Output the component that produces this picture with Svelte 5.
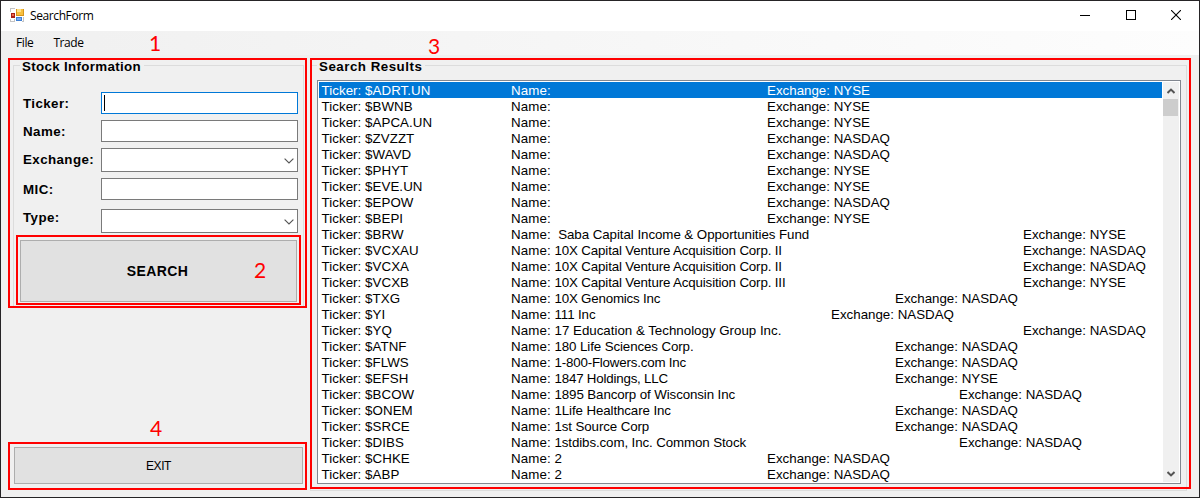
<script>
  const source = [
    ['$ADRT.UN', '', 'NYSE', 0], ['$BWNB', '', 'NYSE', 0], ['$APCA.UN', '', 'NYSE', 0],
    ['$ZVZZT', '', 'NASDAQ', 0], ['$WAVD', '', 'NASDAQ', 0], ['$PHYT', '', 'NYSE', 0],
    ['$EVE.UN', '', 'NYSE', 0], ['$EPOW', '', 'NASDAQ', 0], ['$BEPI', '', 'NYSE', 0],
    ['$BRW', '\u00a0Saba Capital Income & Opportunities Fund', 'NYSE', 4, -0.06],
    ['$VCXAU', '10X Capital Venture Acquisition Corp. II', 'NASDAQ', 4, -0.15],
    ['$VCXA', '10X Capital Venture Acquisition Corp. II', 'NASDAQ', 4, -0.15],
    ['$VCXB', '10X Capital Venture Acquisition Corp. III', 'NYSE', 4, -0.15],
    ['$TXG', '10X Genomics Inc', 'NASDAQ', 2, -0.2],
    ['$YI', '111 Inc', 'NASDAQ', 1],
    ['$YQ', '17 Education & Technology Group Inc.', 'NASDAQ', 4, -0.01],
    ['$ATNF', '180 Life Sciences Corp.', 'NASDAQ', 2],
    ['$FLWS', '1-800-Flowers.com Inc', 'NASDAQ', 2, -0.19],
    ['$EFSH', '1847 Holdings, LLC', 'NYSE', 2, -0.2],
    ['$BCOW', '1895 Bancorp of Wisconsin Inc', 'NASDAQ', 3],
    ['$ONEM', '1Life Healthcare Inc', 'NASDAQ', 2],
    ['$SRCE', '1st Source Corp', 'NASDAQ', 2],
    ['$DIBS', '1stdibs.com, Inc. Common Stock', 'NASDAQ', 3],
    ['$CHKE', '2', 'NASDAQ', 0], ['$ABP', '2', 'NASDAQ', 0]
  ];
  // Each extra tab stop moves the exchange column by 64px.
  const rows = source.map(([ticker, name, exchange, tabs, tracking = -0.11]) => ({ ticker, name, exchange, tracking, width: 256 + tabs * 64 }));
  const fields = [
    { label: 'Ticker:', kind: 'text focus', gap: 6 },
    { label: 'Name:', kind: 'text', gap: 6 },
    { label: 'Exchange:', kind: 'combo', gap: 6 },
    { label: 'MIC:', kind: 'text', gap: 9 },
    { label: 'Type:', kind: 'combo', gap: 0 }
  ];
</script>

<div class="window">
  <header class="titlebar">
    <svg class="appicon" width="14" height="14" viewBox="0 0 14 14" shape-rendering="crispEdges">
      <rect width="14" height="14" fill="#c4c4c4" />
      <path d="M1 1h4v3H1zM1 11h3v2H1zM12 9h1v4h-1z" fill="#fff" />
      <rect x="0" y="4" width="6" height="7" fill="#fff" /><rect x="1" y="5" width="4" height="5" fill="#a91d16" /><rect x="2" y="6" width="2" height="2" fill="#ee6b4d" />
      <rect x="5" y="0" width="9" height="9" fill="#fff" /><rect x="6" y="1" width="8" height="7" fill="#d8951a" /><rect x="7" y="1" width="6" height="6" fill="#f7bf3e" /><rect x="7" y="1" width="4" height="3" fill="#ffe08a" />
      <rect x="5" y="9" width="7" height="5" fill="#fff" /><rect x="6" y="9" width="6" height="4" fill="#3f7fd3" /><rect x="7" y="10" width="4" height="2" fill="#7baaf0" />
    </svg>
    <span class="title">SearchForm</span>
    <div class="controls">
      <svg width="10" height="10" shape-rendering="crispEdges"><path d="M0 5.5h10" stroke="#000" /></svg>
      <svg width="10" height="10" shape-rendering="crispEdges"><rect x=".5" y=".5" width="9" height="9" fill="none" stroke="#000" /></svg>
      <svg width="10" height="10"><path d="M0 0L10 10M10 0L0 10" stroke="#000" stroke-width="1.1" /></svg>
    </div>
  </header>
  <nav class="menu"><span>File</span><span>Trade</span></nav>
  <main>
    <aside>
      <section class="group info">
        <h2>Stock Information</h2>
        <div class="fields">
          {#each fields as f}
            <div class="field" style="margin-bottom: {f.gap}px">
              <span class="label" class:raised={f.label === 'Type:'}>{f.label}</span>
              <div class="box {f.kind}">
                {#if f.kind === 'combo'}
                  <svg width="10" height="6"><path d="M.6.6L5 4.9L9.4.6" fill="none" stroke="#555" stroke-width="1.15" /></svg>
                {:else if f.kind === 'text focus'}<i class="caret"></i>{/if}
              </div>
            </div>
          {/each}
        </div>
        <div class="button search">SEARCH</div>
      </section>
      <div class="button exit">EXIT</div>
    </aside>
    <section class="group results">
      <h2>Search Results</h2>
      <div class="list">
        <div class="rows">
          {#each rows as r, i}
            <div class="row" class:selected={i === 0}>
              <span class="ticker">Ticker: {r.ticker}</span>
              <span class="name" style="width: {r.width}px"><span class="key">Name:</span><span style="letter-spacing: {r.tracking}px">{r.name}</span></span>
              <span class="exchange">Exchange: {r.exchange}</span>
            </div>
          {/each}
        </div>
        <div class="scroll">
          <svg width="8" height="6"><path d="M.5 5L4 1.6L7.5 5" fill="none" stroke="#555" stroke-width="2" /></svg>
          <div class="thumb"></div>
          <svg class="down" width="8" height="6"><path d="M.5 1L4 4.4L7.5 1" fill="none" stroke="#555" stroke-width="2" /></svg>
        </div>
      </div>
    </section>
  </main>
  <div class="mark m1"></div><div class="mark m2"></div><div class="mark m3"></div><div class="mark m4"></div>
  <b class="num n1">1</b><b class="num n2">2</b><b class="num n3">3</b><b class="num n4">4</b>
</div>

<style>
  .window { position: relative; box-sizing: border-box; width: 1200px; height: 498px; border: 1px solid #262426; background: #f0f0f0; color: #000; font: 13.33px/16px "Liberation Sans", Arial, sans-serif; overflow: hidden; display: flex; flex-direction: column; }
  .window * { box-sizing: border-box; }
  svg { display: block; flex: none; }
  .titlebar { height: 30px; background: #fff; display: flex; align-items: center; padding: 0 18px 2px 9px; flex: none; }
  .title { font: 12px/16px "Open Sans", sans-serif; margin-left: 6px; padding-top: 1px; letter-spacing: -.4px; }
  .controls { margin-left: auto; display: flex; gap: 35.5px; }
  .menu { height: 24px; flex: none; display: flex; gap: 20px; padding: 4px 15px; background: linear-gradient(90deg, #f0f0f0, #fdfdfd); font: 12px/16px "Open Sans", sans-serif; letter-spacing: -.4px; }
  main { display: flex; flex: 1; padding: 3px 12px 6px 12px; gap: 9px; }
  aside { width: 291px; display: flex; flex-direction: column; }
  .group { position: relative; border: 1px solid #dcdcdc; }
  h2 { position: absolute; left: 6px; top: -8px; margin: 0; padding: 0 3px 0 2px; background: #f0f0f0; font-size: 13.33px; line-height: 18px; letter-spacing: .33px; white-space: nowrap; }
  .info { height: 242px; margin-top: 7px; }
  .fields { padding: 26px 0 0 8px; display: flex; flex-direction: column; }
  .field { display: flex; }
  .label { width: 79px; padding: 4px 0 0 1px; font-weight: bold; letter-spacing: .42px; }
  .raised { padding-top: 1px; }
  .box { width: 197px; height: 22px; border: 1px solid #7a7a7a; background: #fff; display: flex; }
  .combo { height: 24px; justify-content: flex-end; align-items: center; padding: 2px 3px 0 0; }
  .focus { border-color: #0078d7; padding: 2px; }
  .caret { width: 1px; height: 16px; background: #000; }
  .button { border: 1px solid #adadad; background: #e1e1e1; display: flex; align-items: center; justify-content: center; }
  .search { width: 277px; height: 62px; margin: 7px 0 0 6px; font-size: 14px; font-weight: bold; letter-spacing: .4px; padding: 0 2px 1px 0; }
  .exit { width: 289px; height: 37px; margin: auto 0 7px 1px; font-size: 12px; letter-spacing: -.4px; }
  .results { width: 877px; margin: 7px 0 0 -3px; }
  .results h2 { left: 6px; letter-spacing: .5px; }
  .list { margin: 14px 0 0 6px; width: 864px; height: 404px; border: 1px solid #828790; background: #fff; padding: 1px 1px 1px 1px; display: flex; }
  .rows { width: 843px; flex: none; }
  .row { height: 16px; line-height: 18px; display: flex; padding-left: 2.5px; white-space: pre; }
  .row > span { flex: none; }
  .row .ticker { width: 189.5px; letter-spacing: .05px; }
  .name { display: flex; }
  .key { width: 43.5px; letter-spacing: .1px; }
  .selected { background: #0078d7; color: #fff; }
  .scroll { margin-left: 1px; width: 16px; background: #f0f0f0; display: flex; flex-direction: column; align-items: center; padding: 6px 1px 5px 0; }
  .thumb { width: 15px; height: 17px; margin: 5px 0 0; background: #cdcdcd; flex: none; }
  .down { margin-top: auto; }
  .mark { position: absolute; border: 2px solid #f00; }
  .m1 { left: 7px; top: 57px; width: 299px; height: 250px; }
  .m2 { left: 15px; top: 234px; width: 285px; height: 70px; }
  .m3 { left: 309px; top: 57px; width: 881px; height: 431px; }
  .m4 { left: 7px; top: 441px; width: 299px; height: 48px; }
  .num { position: absolute; color: #f00; font: 21px/24px Lato, "Open Sans", sans-serif; }
  .n1 { left: 148px; top: 30px; } .n2 { left: 253px; top: 257px; }
  .n3 { left: 427px; top: 33px; } .n4 { left: 149px; top: 415px; }
</style>
